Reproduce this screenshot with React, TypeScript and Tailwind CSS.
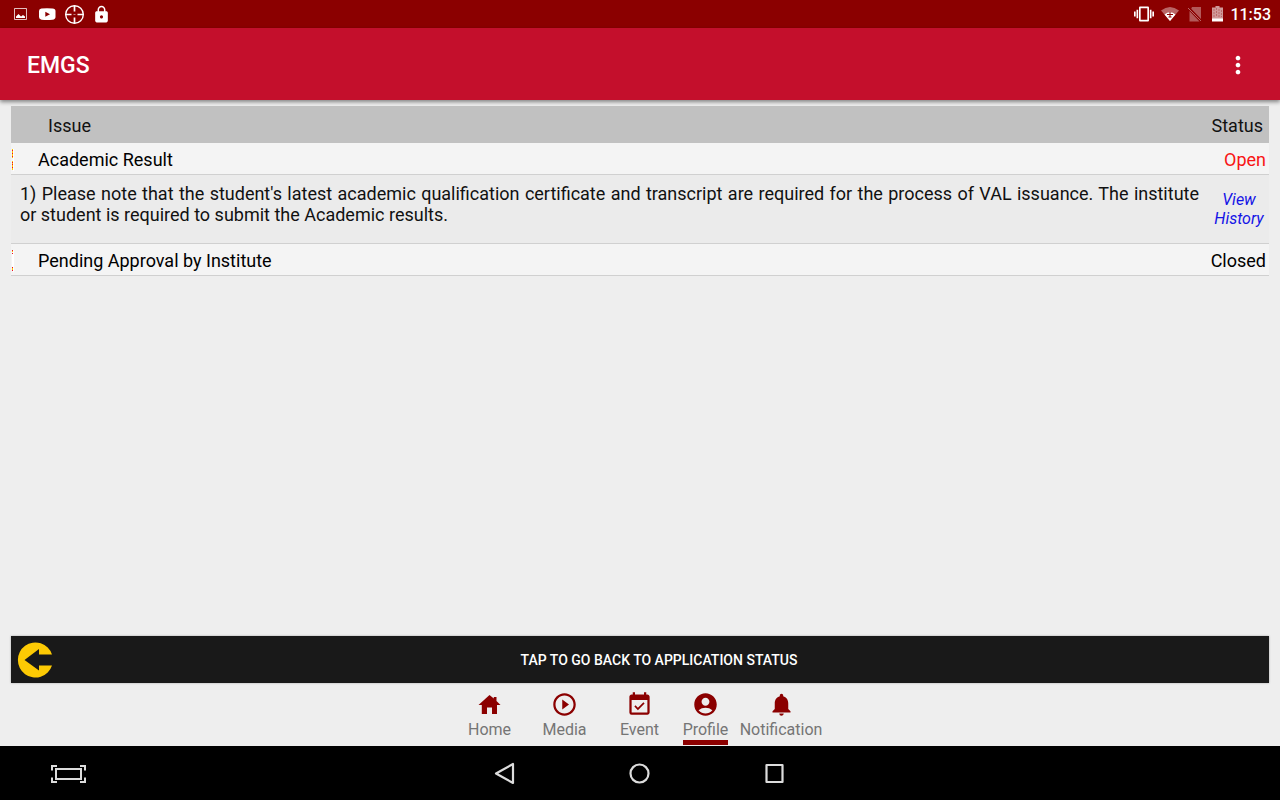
import { MdAccountCircle, MdEventAvailable, MdLock, MdMoreVert, MdNotifications, MdPlayCircleOutline } from 'react-icons/md'

function StatusBar() {
  return (
    <div className="flex h-7 items-center justify-between bg-[#8b0000] pl-3 pr-[9px] text-white">
      <div className="flex items-center gap-2">
        <svg viewBox="0 0 18 18" className="size-[18px]">
          <path d="M2.500 3.500h12v11h-12z" fill="none" stroke="currentColor" strokeOpacity=".75" />
          <path d="M4 13V11.500L6.500 9l2.500 2.500 2-1.500 2 1.500V13z" fill="currentColor" />
        </svg>
        <svg viewBox="0 0 18 18" className="size-[18px]">
          <path d="M3.500 3.500Q9 2.800 14.500 3.500 17.500 3.700 17.500 6v6q0 2.300-3 2.700-5.500.7-11 0Q1 14.300 1 12V6q0-2.300 2.500-2.500z" fill="currentColor" />
          <path d="M7.300 6.800v5L12 9.300z" fill="#8b0000" />
        </svg>
        <svg viewBox="0 0 20 20" className="size-5" fill="none" stroke="currentColor">
          <circle cx="10.500" cy="10.500" r="8.800" strokeWidth="1.400" />
          <path d="M10.500 1.500v6M10.500 13.500v6M1.500 10.500h6M13.500 10.500h6" strokeWidth="1.700" />
          <path d="M9.500 10.500h2" strokeOpacity=".5" />
        </svg>
        <MdLock className="size-[19px]" />
      </div>
      <div className="flex items-center">
        <svg viewBox="0 0 24 24" className="mr-1.5 size-5" fill="currentColor">
          <path d="M0 15h2V9H0v6zm3 2h2V7H3v10zm19-8v6h2V9h-2zm-3 8h2V7h-2v10zM16.500 3h-9C6.670 3 6 3.670 6 4.500v15c0 .83.670 1.500 1.500 1.500h9c.83 0 1.500-.67 1.500-1.500v-15c0-.83-.67-1.500-1.500-1.500zM16 19H8V5h8v14z" />
        </svg>
        <svg viewBox="0 0 20 20" className="mr-1.5 size-5">
          <path d="M1 6.500Q10-.5 19 6.500L10 17z" fill="#fff" fillOpacity=".4" />
          <path d="M4.500 10.500Q10 6 15.500 10.500L10 17z" fill="#fff" />
          <path d="M10 8v5M7 10.500h6M8.500 13h3" stroke="#8b0000" strokeWidth="1" />
        </svg>
        <svg viewBox="0 0 18 18" className="mr-1 size-[18px]">
          <path d="M6 2h9v12L5.200 3.800zM3.500 6l10 10.500h-10z" fill="#fff" fillOpacity=".35" />
          <path d="M2 3l13 13" stroke="#fff" strokeOpacity=".4" />
        </svg>
        <svg viewBox="0 0 18 18" className="mr-1 size-[18px]">
          <path d="M4 2.500h3.500V1h4v1.500H15V14H4z" fill="#fff" fillOpacity=".6" />
          <path d="M6 4v8M8.500 3v8M11 4v9M13.500 5v7" stroke="#8b0000" strokeOpacity=".3" strokeDasharray="2 1" />
          <path d="M4 13.500h11v3H4z" fill="#fff" />
        </svg>
        <span className="pt-0.5 text-base leading-5 font-medium">11:53</span>
      </div>
    </div>
  )
}

// sliver of the status marker that shows at the left edge of an issue row
function RowMarker({ open }: { open?: boolean }) {
  return (
    <svg viewBox="0 0 2 22" className="h-[22px] w-0.5" shapeRendering="crispEdges">
      <path d="M1 0h1v22H1z" fill="#fff" />
      {open ? (
        <>
          <path d="M0 0h1v9H0zM0 12h1v9H0z" fill="#ffc400" />
          <path d="M0 1h1v1H0zM0 4h1v1H0zM0 7h1v1H0zM0 13h1v1H0zM0 15h1v1H0zM0 18h1v1H0z" fill="#f01020" />
        </>
      ) : (
        <>
          <path d="M0 4h1v14H0z" fill="#fff" />
          <path d="M0 0h1v1H0zM0 3h1v1H0zM0 17h1v1H0zM0 20h1v1H0z" fill="#f01020" />
          <path d="M0 1h1v1H0zM0 18h1v2H0z" fill="#ffc400" />
        </>
      )}
    </svg>
  )
}

function HomeIcon({ className }: { className?: string }) {
  return (
    <svg viewBox="0 0 27 27" className={className} fill="currentColor">
      <path d="M11 23v-6.500h5V23h5v-9h3.500L20.500 10V6h-2.700v1.500L13.500 4 2.500 14h3.300v9z" />
    </svg>
  )
}

const tabs = [
  { label: 'Home', icon: HomeIcon, width: 'w-[75px]' },
  { label: 'Media', icon: MdPlayCircleOutline, width: 'w-[75px]' },
  { label: 'Event', icon: MdEventAvailable, width: 'w-[75px]' },
  { label: 'Profile', icon: MdAccountCircle, width: 'w-[57px]', active: true },
  { label: 'Notification', icon: MdNotifications, width: 'w-[94px]' },
]

export default function App() {
  return (
    <div className="flex min-h-screen flex-col bg-[#eeeeee] font-[Roboto,sans-serif] text-[#111]">
      <StatusBar />

      <header className="flex h-[72px] items-center justify-between bg-[#c40f2c] pl-[27px] pr-7 pt-0.5 text-white shadow-[0_2px_4px_rgba(0,0,0,0.45)]">
        <h1 className="pt-0.5 text-[23px] font-medium">EMGS</h1>
        <button type="button" aria-label="More options">
          <MdMoreVert className="size-7" />
        </button>
      </header>

      <main className="flex flex-1 flex-col justify-between px-[11px] pt-1.5">
        <table className="w-full border-separate border-spacing-0 text-lg leading-[21px]">
          <thead>
            <tr className="h-[37px] bg-[#c1c1c1]">
              <th className="pl-[37px] pt-0.5 text-left font-normal">Issue</th>
              <th className="w-[60px] pr-1.5 pt-0.5 text-right font-normal">Status</th>
            </tr>
          </thead>
          <tbody>
            <tr className="h-8 bg-[#f4f4f4] text-black">
              <td className="border-b border-[#d0d0d0] pt-0.5">
                <div className="flex items-center gap-6 pl-px">
                  <RowMarker open />
                  Academic Result
                </div>
              </td>
              <td className="border-b border-[#d0d0d0] pr-[3px] pt-0.5 text-right text-[#f81414]">Open</td>
            </tr>
            <tr className="h-[69px] bg-[#ebebeb]">
              <td className="border-b border-[#d0d0d0] pb-4 pl-[9px] pr-2.5 pt-2 text-justify align-top">
                1) Please note that the student's latest academic qualification certificate and transcript are required for the process of VAL issuance. The institute or student is required to submit the Academic results.
              </td>
              <td className="border-b border-[#d0d0d0] text-center text-base leading-[19px]">
                <a href="#history" className="italic text-[#1414e6]">View<br />History</a>
              </td>
            </tr>
            <tr className="h-8 bg-[#f4f4f4] text-black">
              <td className="border-b border-[#d0d0d0] pt-0.5">
                <div className="flex items-center gap-6 pl-px">
                  <RowMarker />
                  Pending Approval by Institute
                </div>
              </td>
              <td className="border-b border-[#d0d0d0] pr-[3px] pt-0.5 text-right">Closed</td>
            </tr>
          </tbody>
        </table>

        <button type="button" className="flex h-[47px] w-full items-center bg-[#191919] pl-1.5 text-sm font-medium text-white shadow-[0_0_2px_rgba(0,0,0,0.3)]">
          <svg viewBox="0 0 36 36" className="size-9">
            <path d="M35 12.500A17.500 17.500 0 1 0 35 23.500H22v5L7.500 18 22 7v5.500z" fill="#fdca04" />
          </svg>
          <span className="flex-1 pr-1">TAP TO GO BACK TO APPLICATION STATUS</span>
        </button>
      </main>

      <nav className="flex h-[63px] justify-center">
        {tabs.map(({ label, icon: Icon, width, active }) => (
          <a key={label} href={`#${label.toLowerCase()}`} className={`flex flex-col items-center pt-2 text-base text-[#757575] ${width}`}>
            <Icon className="size-[27px] text-[#8b0000]" />
            <span className={active ? 'border-b-5 border-[#8b0000] pt-0.5 leading-5' : 'pt-0.5 leading-5'}>{label}</span>
          </a>
        ))}
      </nav>

      <footer className="grid h-[54px] grid-cols-[1fr_auto_1fr] items-center bg-black text-[#dcdcdc]">
        <button type="button" aria-label="Screenshot" className="ml-[51px] justify-self-start pt-0.5">
          <svg viewBox="0 0 35 18" className="h-[18px] w-[35px]" fill="none" stroke="currentColor" strokeWidth="2">
            <path d="M5 4h25v10H5z" />
            <path d="M1 5.500V1h5M29 1h5v4.500M34 12.500V17h-5M6 17H1v-4.500" />
          </svg>
        </button>
        <div className="flex items-center gap-[111px]">
          <button type="button" aria-label="Back">
            <svg viewBox="0 0 24 24" className="size-6" fill="none" stroke="currentColor" strokeWidth="2.200" strokeLinejoin="round">
              <path d="M20 3v19L3 12.500z" />
            </svg>
          </button>
          <button type="button" aria-label="Home screen">
            <svg viewBox="0 0 24 24" className="size-6" fill="none" stroke="currentColor" strokeWidth="2.200">
              <circle cx="11.500" cy="12.500" r="9" />
            </svg>
          </button>
          <button type="button" aria-label="Recent apps">
            <svg viewBox="0 0 24 24" className="size-6" fill="none" stroke="currentColor" strokeWidth="2.200" strokeLinejoin="round">
              <path d="M3.500 4h16v17h-16z" />
            </svg>
          </button>
        </div>
      </footer>
    </div>
  )
}
